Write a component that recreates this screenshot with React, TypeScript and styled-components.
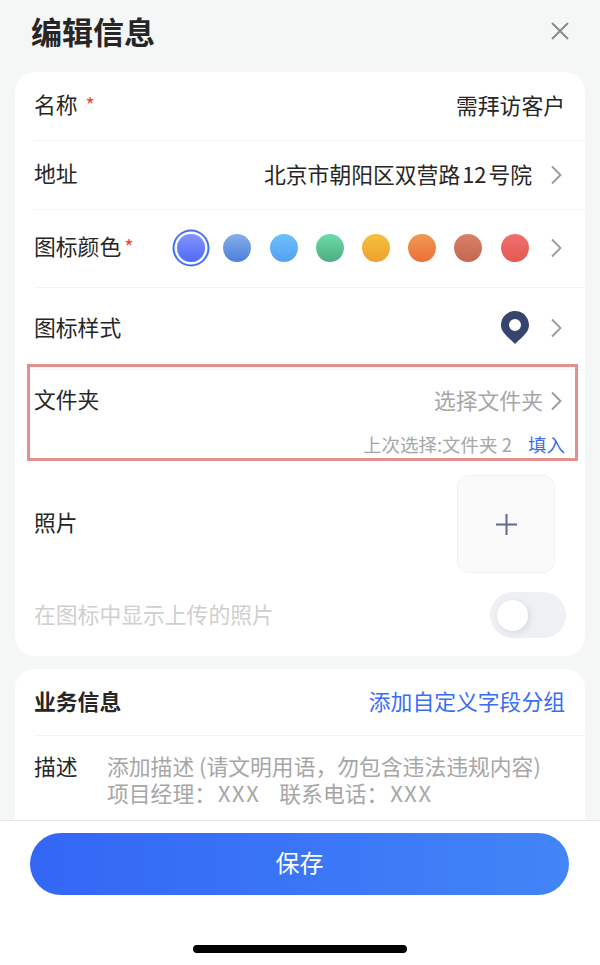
import styled, { createGlobalStyle } from "styled-components";

const GlobalStyle = createGlobalStyle`
  html, body {
    margin: 0;
    padding: 0;
    background: #f5f7f7;
  }
  * {
    box-sizing: border-box;
  }
`;

const Page = styled.div`
  width: 600px;
  height: 965px;
  display: flex;
  flex-direction: column;
  overflow: hidden;
  background: #f5f7f7;
  color: #262626;
  font-family: "Noto Sans CJK SC", "Noto Sans", sans-serif;
  font-size: 21.8px;
  line-height: 30px;
`;

const Scroller = styled.div`
  flex: 1;
  min-height: 0;
  overflow: hidden;
  padding: 0 15px;
`;

const Header = styled.div`
  height: 72px;
  padding: 0 15px 10px 16px;
  display: flex;
  align-items: center;
  justify-content: space-between;
`;

const Title = styled.h1`
  margin: 0;
  font-size: 31px;
  line-height: 40px;
  font-weight: 600;
  color: #262626;
`;

const Card = styled.div<{ $minHeight?: number }>`
  min-height: ${(p) => p.$minHeight ?? 0}px;
  background: #fff;
  border-radius: 20px;
  padding-left: 19px;
  & + & {
    margin-top: 13px;
  }
`;

const Row = styled.div<{ $height: number }>`
  height: ${(p) => p.$height}px;
  padding-right: 20px;
  display: flex;
  align-items: center;
  justify-content: space-between;
  border-bottom: 1px solid #f4f4f4;
`;

const Label = styled.span`
  display: flex;
  align-items: baseline;
  margin-bottom: 4px;
`;

const Star = styled.span<{ $gap: number }>`
  margin-left: ${(p) => p.$gap}px;
  color: #f04438;
  font-size: 20px;
`;

const Value = styled.div<{ $gap?: number; $lift?: number }>`
  display: flex;
  align-items: center;
  gap: ${(p) => p.$gap ?? 0}px;
  margin-bottom: ${(p) => p.$lift ?? 0}px;
`;

const ValueText = styled.span`
  margin-bottom: 3px;
`;

const Digits = styled.span`
  margin: 0 2px;
`;

const Muted = styled(ValueText)`
  color: #a6a6a6;
`;

const LinkText = styled(ValueText)`
  color: #3a6cf6;
`;

const ChevronIcon = styled.svg`
  display: block;
  width: 11px;
  height: 20px;
  margin-right: 3px;
  flex: none;
`;

const Dots = styled.div`
  display: flex;
  align-items: center;
  gap: 18.2px;
  margin-right: 22.5px;
`;

const Dot = styled.span<{ $from: string; $to: string; $selected?: boolean }>`
  width: 28px;
  height: 28px;
  border-radius: 50%;
  background: linear-gradient(180deg, ${(p) => p.$from}, ${(p) => p.$to});
  box-shadow: ${(p) =>
    p.$selected ? "0 0 0 2.5px #fff, 0 0 0 4.5px #3f6ff6" : "none"};
`;

const FolderBlock = styled.div`
  position: relative;
  height: 91px;
  padding-right: 20px;
`;

const FolderMain = styled.div`
  height: 62px;
  display: flex;
  align-items: center;
  justify-content: space-between;
`;

const FolderHint = styled.div`
  height: 24px;
  display: flex;
  align-items: center;
  justify-content: flex-end;
  gap: 16px;
  font-size: 18.5px;
  line-height: 24px;
  color: #a6a6a6;
`;

const FillLink = styled.span`
  color: #3a6cf6;
`;

const Highlight = styled.div`
  position: absolute;
  top: -6px;
  left: -7px;
  right: 7px;
  bottom: 0;
  border: 3px solid #e58e8e;
  pointer-events: none;
`;

const PhotoRow = styled.div`
  padding: 14px 30px 0 0;
  display: flex;
  align-items: center;
  justify-content: space-between;
`;

const UploadBox = styled.div`
  width: 98px;
  height: 98px;
  display: flex;
  align-items: center;
  justify-content: center;
  background: #fafafb;
  border: 1px solid #f0f0f2;
  border-radius: 12px;
`;

const ToggleRow = styled.div`
  padding: 19px 19px 18px 0;
  display: flex;
  align-items: center;
  justify-content: space-between;
`;

const DisabledText = styled(ValueText)`
  color: #cfcfcf;
`;

const Toggle = styled.div`
  width: 76px;
  height: 46px;
  padding-left: 7px;
  display: flex;
  align-items: center;
  background: #eef0f3;
  border-radius: 23px;
`;

const Thumb = styled.div`
  width: 31px;
  height: 31px;
  border-radius: 50%;
  background: #fff;
  box-shadow: 2px 2px 6px rgba(120, 130, 150, 0.2);
`;

const SectionTitle = styled(ValueText)`
  font-weight: 600;
`;

const DescRow = styled.div`
  padding: 16px 20px 0 0;
  display: flex;
  align-items: flex-start;
`;

const DescLabel = styled.span`
  width: 73px;
  flex: none;
  line-height: 27px;
`;

const DescText = styled.div`
  line-height: 27px;
  color: #a6a6a6;
`;

const DescLine = styled.div`
  display: flex;
  white-space: pre;
`;

const Placeholder = styled.span<{ $gap?: number }>`
  margin: 0 ${(p) => p.$gap ?? 0}px 0 2px;
  letter-spacing: 1.6px;
`;

const Footer = styled.div`
  height: 145px;
  flex: none;
  padding: 12px 31px 0 30px;
  display: flex;
  flex-direction: column;
  background: #fff;
  border-top: 1px solid #e6e6e6;
`;

const SaveButton = styled.button`
  height: 62px;
  padding: 0 0 5px;
  border: none;
  border-radius: 31px;
  font-family: inherit;
  font-size: 24px;
  color: #fff;
  background: linear-gradient(90deg, #3366f5, #4285f7);
`;

const HomeBar = styled.div`
  width: 214px;
  height: 8px;
  margin: 50px auto 0;
  border-radius: 4px;
  background: #000;
`;

const colors = [
  ["#8492fb", "#4f6af8"],
  ["#86aee8", "#4a80dc"],
  ["#6cc0fb", "#55a0f2"],
  ["#6cdca8", "#50ac80"],
  ["#f4c03e", "#f0a030"],
  ["#f09a50", "#ea7038"],
  ["#d88068", "#c46850"],
  ["#ee7070", "#e45850"],
];

function Chevron() {
  return (
    <ChevronIcon viewBox="0 0 11 20" fill="none">
      <path d="M1 1.5 L9.5 10 L1 18.5" stroke="#999" strokeWidth="1.8" />
    </ChevronIcon>
  );
}

export default function App() {
  return (
    <Page>
      <GlobalStyle />
      <Scroller>
        <Header>
          <Title>编辑信息</Title>
          <svg width="20" height="20" viewBox="0 0 20 20" fill="none">
            <path d="M2 2 L18 18 M18 2 L2 18" stroke="#8a8a8a" strokeWidth="2" />
          </svg>
        </Header>

        <Card>
          <Row $height={69}>
            <Label>
              名称<Star $gap={8}>*</Star>
            </Label>
            <ValueText>需拜访客户</ValueText>
          </Row>
          <Row $height={69}>
            <Label>地址</Label>
            <Value $gap={19}>
              <ValueText>
                北京市朝阳区双营路<Digits>12</Digits>号院
              </ValueText>
              <Chevron />
            </Value>
          </Row>
          <Row $height={78}>
            <Label>
              图标颜色<Star $gap={3}>*</Star>
            </Label>
            <Value $lift={2}>
              <Dots>
                {colors.map(([from, to], i) => (
                  <Dot key={from} $from={from} $to={to} $selected={i === 0} />
                ))}
              </Dots>
              <Chevron />
            </Value>
          </Row>
          <Row $height={82}>
            <Label>图标样式</Label>
            <Value $gap={22} $lift={2}>
              <svg width="28" height="33" viewBox="0 0 28 33">
                <path
                  fillRule="evenodd"
                  fill="#36456b"
                  d="M14 0 C6.3 0 0 6.2 0 14 C0 20.5 4.5 24 14 33 C23.5 24 28 20.5 28 14 C28 6.2 21.7 0 14 0 Z M14 8 A6 6 0 1 1 14 20 A6 6 0 1 1 14 8 Z"
                />
              </svg>
              <Chevron />
            </Value>
          </Row>
          <FolderBlock>
            <FolderMain>
              <Label>文件夹</Label>
              <Value $gap={8}>
                <Muted>选择文件夹</Muted>
                <Chevron />
              </Value>
            </FolderMain>
            <FolderHint>
              <span>上次选择:文件夹 2</span>
              <FillLink>填入</FillLink>
            </FolderHint>
            <Highlight />
          </FolderBlock>
          <PhotoRow>
            <Label>照片</Label>
            <UploadBox>
              <svg width="21" height="21" viewBox="0 0 21 21" fill="none">
                <path d="M10.5 0 V21 M0 10.5 H21" stroke="#5c6a8c" strokeWidth="2" />
              </svg>
            </UploadBox>
          </PhotoRow>
          <ToggleRow>
            <DisabledText>在图标中显示上传的照片</DisabledText>
            <Toggle>
              <Thumb />
            </Toggle>
          </ToggleRow>
        </Card>

        <Card $minHeight={200}>
          <Row $height={67}>
            <SectionTitle>业务信息</SectionTitle>
            <LinkText>添加自定义字段分组</LinkText>
          </Row>
          <DescRow>
            <DescLabel>描述</DescLabel>
            <DescText>
              <DescLine>添加描述 (请文明用语，勿包含违法违规内容)</DescLine>
              <DescLine>
                项目经理：<Placeholder $gap={19}>XXX</Placeholder>联系电话：
                <Placeholder>XXX</Placeholder>
              </DescLine>
            </DescText>
          </DescRow>
        </Card>
      </Scroller>

      <Footer>
        <SaveButton>保存</SaveButton>
        <HomeBar />
      </Footer>
    </Page>
  );
}
